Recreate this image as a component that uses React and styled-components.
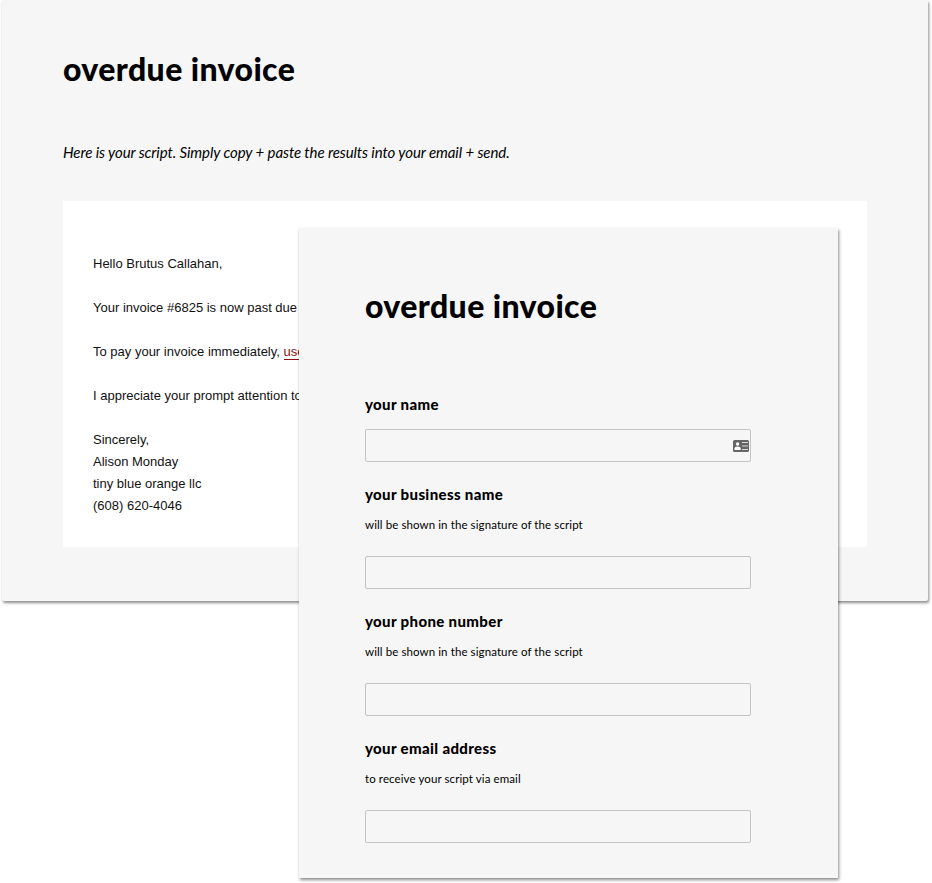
import React from 'react'
import styled, { createGlobalStyle } from 'styled-components'

const GlobalStyle = createGlobalStyle`
  html, body {
    margin: 0;
    padding: 0;
    background: #fff;
    overflow: hidden;
  }
`

const Page = styled.div`
  position: relative;
  width: 932px;
  height: 883px;
  overflow: hidden;
  font-family: "Lato", "Liberation Sans", sans-serif;
  color: #000;
`

const ScriptPanel = styled.section`
  box-sizing: border-box;
  width: 926px;
  height: 601px;
  margin-left: 2px;
  padding: 0 61px;
  background: #f6f6f6;
  border-radius: 2px;
  box-shadow: 1px 2px 3px rgba(0, 0, 0, 0.45);
`

const Title = styled.h1`
  margin: 0;
  font-size: 32px;
  line-height: 40px;
  font-weight: 900;
  letter-spacing: 0.4px;
`

const ScriptTitle = styled(Title)`
  padding-top: 49px;
`

const Intro = styled.p`
  margin: 53px 0 0;
  font-size: 15px;
  line-height: 20px;
  font-style: italic;
  letter-spacing: -0.09px;
`

const EmailCard = styled.div`
  box-sizing: border-box;
  height: 346px;
  margin-top: 39px;
  padding: 52px 30px 0;
  background: #fff;
  font-family: "Liberation Sans", Arial, sans-serif;
  font-size: 13px;
  line-height: 22px;
  color: #111;
`

const EmailLine = styled.p`
  margin: 0 0 22px;
  white-space: nowrap;
`

const EmailLink = styled.a`
  color: #8a1010;
  text-decoration: none;
  border-bottom: 1px solid #8a1010;
`

const FormPanel = styled.form`
  position: absolute;
  left: 299px;
  top: 228px;
  box-sizing: border-box;
  width: 539px;
  height: 650px;
  padding: 58px 66px 0;
  background: #f6f6f6;
  box-shadow: 1px 2px 3px rgba(0, 0, 0, 0.45);
`

const Fields = styled.div`
  margin-top: 68px;
`

const Field = styled.div`
  margin-bottom: 22px;
`

const Label = styled.label`
  display: block;
  font-size: 15px;
  line-height: 20px;
  font-weight: 900;
  letter-spacing: 0.36px;
`

const Hint = styled.p`
  margin: 13px 0 0;
  font-size: 11.5px;
  line-height: 16px;
  letter-spacing: 0.1px;
`

const InputWrap = styled.div`
  position: relative;
  width: 386px;
  margin-top: ${p => (p.$hinted ? '23px' : '15px')};
`

const Input = styled.input`
  display: block;
  box-sizing: border-box;
  width: 100%;
  height: 33px;
  padding: 0 8px;
  background: #f6f6f6;
  border: 1px solid #c4c4c4;
  border-radius: 2px;
  outline: none;
`

const ContactIcon = styled.svg`
  position: absolute;
  right: 2px;
  top: 11px;
  width: 16px;
  height: 12px;
`

const AutofillIcon = () => (
  <ContactIcon viewBox="0 0 16 12">
    <rect width="16" height="12" rx="1.5" fill="#666" />
    <circle cx="4.6" cy="4" r="1.7" fill="#fff" />
    <path d="M1.5 10V8.6C1.5 7.4 2.8 6.6 4.6 6.6S7.7 7.4 7.7 8.6V10Z" fill="#fff" />
    <path d="M9 2.5H15M9 6H15M9 9.5H15" stroke="#d8d8d8" strokeWidth="1.2" />
  </ContactIcon>
)

const fields = [
  { label: 'your name', icon: true },
  { label: 'your business name', hint: 'will be shown in the signature of the script' },
  { label: 'your phone number', hint: 'will be shown in the signature of the script' },
  { label: 'your email address', hint: 'to receive your script via email' },
]

const App = () => {
  return (
    <Page>
      <GlobalStyle />
      <ScriptPanel>
        <ScriptTitle>overdue invoice</ScriptTitle>
        <Intro>Here is your script. Simply copy + paste the results into your email + send.</Intro>
        <EmailCard>
          <EmailLine>Hello Brutus Callahan,</EmailLine>
          <EmailLine>Your invoice #6825 is now past due</EmailLine>
          <EmailLine>
            To pay your invoice immediately, <EmailLink href="#">use</EmailLink>
          </EmailLine>
          <EmailLine>I appreciate your prompt attention to</EmailLine>
          <div>Sincerely,</div>
          <div>Alison Monday</div>
          <div>tiny blue orange llc</div>
          <div>(608) 620-4046</div>
        </EmailCard>
      </ScriptPanel>
      <FormPanel>
        <Title as="h2">overdue invoice</Title>
        <Fields>
          {fields.map(f => (
            <Field key={f.label}>
              <Label>{f.label}</Label>
              {f.hint && <Hint>{f.hint}</Hint>}
              <InputWrap $hinted={!!f.hint}>
                <Input type="text" />
                {f.icon && <AutofillIcon />}
              </InputWrap>
            </Field>
          ))}
        </Fields>
      </FormPanel>
    </Page>
  )
}

export default App
